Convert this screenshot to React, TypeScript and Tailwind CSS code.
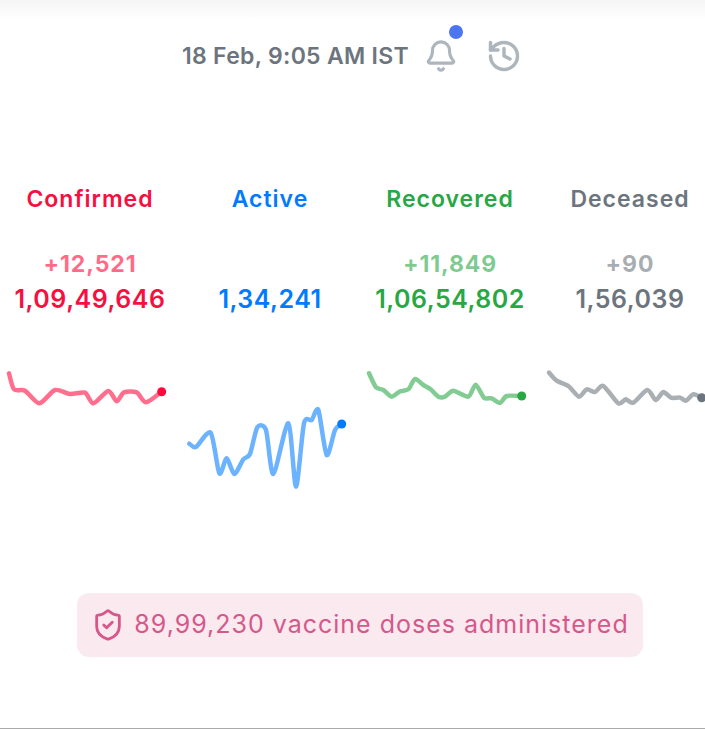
import { Bell, History, ShieldCheck } from "lucide-react";

type Col = {
  label: string;
  delta?: string;
  total: string;
  text: string;
  faint: string;
  stroke: string;
  h: string;
  mt: string;
  vb: string;
  pts: [number, number][];
  end: [number, number];
};

const smooth = (p: [number, number][]) => {
  let d = `M${p[0][0]} ${p[0][1]}`;
  for (let i = 0; i < p.length - 1; i++) {
    const p0 = p[i - 1] || p[i];
    const p1 = p[i];
    const p2 = p[i + 1];
    const p3 = p[i + 2] || p2;
    d += ` C${p1[0] + (p2[0] - p0[0]) / 8} ${p1[1] + (p2[1] - p0[1]) / 8} ${p2[0] - (p3[0] - p1[0]) / 8} ${p2[1] - (p3[1] - p1[1]) / 8} ${p2[0]} ${p2[1]}`;
  }
  return d;
};

const z = (pts: number[][], ox: number): [number, number][] =>
  pts.map(([x, y]) => [x / 3 + ox, y / 3]);

const cols: Col[] = [
  {
    label: "Confirmed",
    delta: "+12,521",
    total: "1,09,49,646",
    text: "text-[#f5103f]",
    faint: "text-[#ff073a]/60",
    stroke: "#ff073a",
    h: "h-[60px]",
    mt: "mt-[43px]",
    vb: "0 0 180 60",
    pts: z([[27,40],[42,88],[75,92],[118,130],[165,90],[210,102],[255,98],[280,130],[325,93],[350,124],[372,97],[410,97],[438,127],[485,95]], 0),
    end: [161.7, 31.7],
  },
  {
    label: "Active",
    total: "1,34,241",
    text: "text-[#007bff]",
    faint: "text-[#007bff]/60",
    stroke: "#007bff",
    h: "h-[95px]",
    mt: "mt-[83px]",
    vb: "0 0 180 95",
    pts: z([[28,131],[48,141],[92,98],[118,220],[140,175],[163,222],[190,178],[210,162],[232,82],[258,90],[280,222],[325,70],[348,260],[372,70],[395,60],[415,30],[440,165],[465,90],[485,72]], 0),
    end: [161.7, 24],
  },
  {
    label: "Recovered",
    delta: "+11,849",
    total: "1,06,54,802",
    text: "text-[#28a745]",
    faint: "text-[#28a745]/60",
    stroke: "#28a745",
    h: "h-[60px]",
    mt: "mt-[43px]",
    vb: "0 0 180 60",
    pts: z([[27,40],[48,82],[70,90],[95,110],[120,94],[145,88],[165,57],[190,75],[212,88],[235,110],[255,110],[280,92],[325,110],[347,74],[372,113],[395,115],[420,129],[440,108],[485,108]], 0),
    end: [161.7, 36],
  },
  {
    label: "Deceased",
    delta: "+90",
    total: "1,56,039",
    text: "text-[#6c757d]",
    faint: "text-[#6c757d]/60",
    stroke: "#6c757d",
    h: "h-[60px]",
    mt: "mt-[43px]",
    vb: "0 0 180 60",
    pts: z([[42,38],[65,62],[100,78],[132,110],[155,88],[180,96],[205,78],[250,130],[272,118],[295,128],[337,90],[362,120],[385,96],[408,113],[435,113],[453,122],[475,103],[500,113]], -5),
    end: [161.7, 37.7],
  },
];

export default function App() {
  return (
    <div className="h-[729px] w-[705px] overflow-hidden border-b border-[#aaaaaa] bg-white font-['Inter',sans-serif]">
      <div className="flex h-[728px] w-[720px] flex-col">
        <div className="h-5 shrink-0 bg-gradient-to-b from-[#f5f5f5] to-white" />

        <div className="mt-[12px] flex h-[48px] shrink-0 items-center justify-center pr-[16px]">
          <span className="text-[23px] font-semibold tracking-[0.3px] text-[#6c757d]">18 Feb, 9:05 AM IST</span>
          <span className="relative ml-[15px] flex">
            <Bell size={34} strokeWidth={2.2} className="text-[#adb5bd]" />
            <span className="absolute right-[-5px] top-[-14px] h-[14px] w-[14px] rounded-full bg-[#4c75f2]" />
          </span>
          <History size={36} strokeWidth={2.3} className="ml-[28px] text-[#adb5bd]" />
        </div>

        <div className="mt-[102px] grid shrink-0 grid-cols-4 items-start">
          {cols.map((c) => (
            <div key={c.label} className="flex flex-col items-center">
              <div className={`h-[34px] text-[23px] font-semibold leading-[34px] tracking-[1px] ${c.text}`}>{c.label}</div>
              <div className={`mt-[31px] h-[34px] text-[23px] font-bold leading-[34px] tracking-[0.9px] ${c.faint}`}>{c.delta}</div>
              <div className={`h-[36px] text-[25px] font-semibold leading-[36px] tracking-[0.5px] ${c.text}`}>{c.total}</div>
              <svg viewBox={c.vb} className={`w-[180px] ${c.h} ${c.mt}`}>
                <path
                  d={smooth(c.pts)}
                  fill="none"
                  stroke={c.stroke}
                  strokeOpacity={0.58}
                  strokeWidth={4.5}
                  strokeLinecap="round"
                  strokeLinejoin="round"
                />
                <circle cx={c.end[0]} cy={c.end[1]} r={4.5} fill={c.stroke} />
              </svg>
            </div>
          ))}
        </div>

        <div className="mt-auto mb-[71px] flex justify-center">
          <div className="flex h-[64px] w-[566px] items-center justify-center gap-[9px] rounded-[12px] bg-[#fae9ef]">
            <ShieldCheck size={34} strokeWidth={2} className="text-[#d6588a]" />
            <span className="text-[25px] font-normal tracking-[1px] text-[#d6588a]">89,99,230 vaccine doses administered</span>
          </div>
        </div>
      </div>
    </div>
  );
}
